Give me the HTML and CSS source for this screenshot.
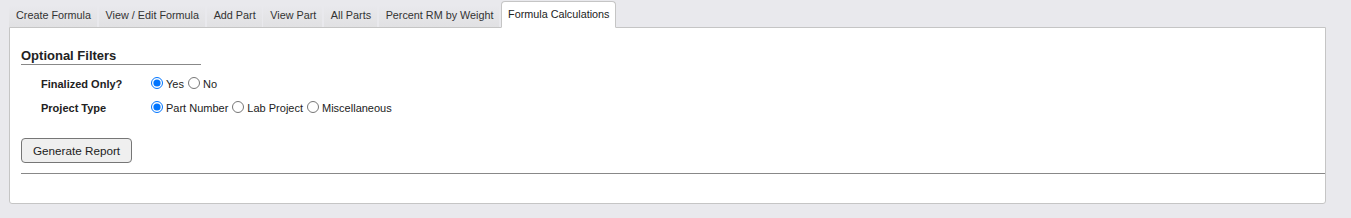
FILE: index.html
```html
<!DOCTYPE html>
<html>
<head>
<meta charset="utf-8">
<link rel="stylesheet" href="styles.css">
</head>
<body>
<div class="page">
  <ul class="tabs">
    <li class="tab">Create Formula</li>
    <li class="tab">View / Edit Formula</li>
    <li class="tab">Add Part</li>
    <li class="tab">View Part</li>
    <li class="tab">All Parts</li>
    <li class="tab">Percent RM by Weight</li>
    <li class="tab active">Formula Calculations</li>
  </ul>
  <div class="panel">
    <h3 class="heading">Optional Filters</h3>
    <div class="filters">
      <div class="label">Finalized Only?</div>
      <div class="options">
        <label class="opt"><input type="radio" name="fin" checked>Yes</label>
        <label class="opt"><input type="radio" name="fin">No</label>
      </div>
      <div class="label">Project Type</div>
      <div class="options">
        <label class="opt"><input type="radio" name="pt" checked>Part Number</label>
        <label class="opt"><input type="radio" name="pt">Lab Project</label>
        <label class="opt"><input type="radio" name="pt">Miscellaneous</label>
      </div>
    </div>
    <button class="btn">Generate Report</button>
    <hr class="rule">
  </div>
</div>
</body>
</html>
```

FILE: styles.css
```css
html, body {
  margin: 0;
  padding: 0;
  background: #e9e9ed;
  font-family: "Liberation Sans", Arial, sans-serif;
  color: #222;
}
.page {
  padding: 1px 25px 0 9px;
}
.tabs {
  list-style: none;
  margin: 0;
  padding: 0;
  display: flex;
  align-items: flex-end;
  gap: 1.6px;
  height: 26px;
  position: relative;
  z-index: 1;
}
.tab {
  font-size: 10.8px;
  color: #333;
  padding: 4px 6px 5px 7px;
  background: linear-gradient(#e9e9ed, #e1e1e3);
  line-height: 13px;
}
.tab.active {
  background: #fff;
  border: 1px solid #c5c5c5;
  border-bottom: 1px solid #fff;
  border-radius: 4px 4px 0 0;
  padding: 6px 6px 6px 6px;
  color: #222;
  margin-bottom: -1px;
}
.panel {
  background: #fff;
  border: 1px solid #c5c5c5;
  border-radius: 0 0 3px 3px;
  padding: 20px 0 29px 11px;
}
.heading {
  margin: 0;
  font-size: 13px;
  font-weight: bold;
  color: #222;
  width: 180px;
  border-bottom: 1px solid #888;
  padding-bottom: 1px;
  line-height: 15px;
}
.filters {
  display: grid;
  grid-template-columns: 110px auto;
  row-gap: 10px;
  margin: 12px 0 0 20px;
  align-items: center;
}
.label {
  font-size: 11px;
  font-weight: bold;
  color: #222;
  line-height: 13px;
}
.options {
  display: flex;
  align-items: center;
  font-size: 11px;
  color: #222;
  line-height: 13px;
}
.opt {
  display: flex;
  align-items: center;
  margin-right: 4px;
}
.opt input {
  margin: 0 3px 2px 0;
  width: 12px;
  height: 12px;
}
.btn {
  display: block;
  margin-top: 23px;
  font-family: "Liberation Sans", Arial, sans-serif;
  font-size: 11.7px;
  color: #222;
  background: #efefef;
  border: 1px solid #767676;
  border-radius: 4px;
  padding: 0 11px;
  height: 25px;
  white-space: nowrap;
}
.rule {
  margin: 10px 0 0 0;
  border: 0;
  border-top: 1px solid #888;
  height: 0;
}
```
